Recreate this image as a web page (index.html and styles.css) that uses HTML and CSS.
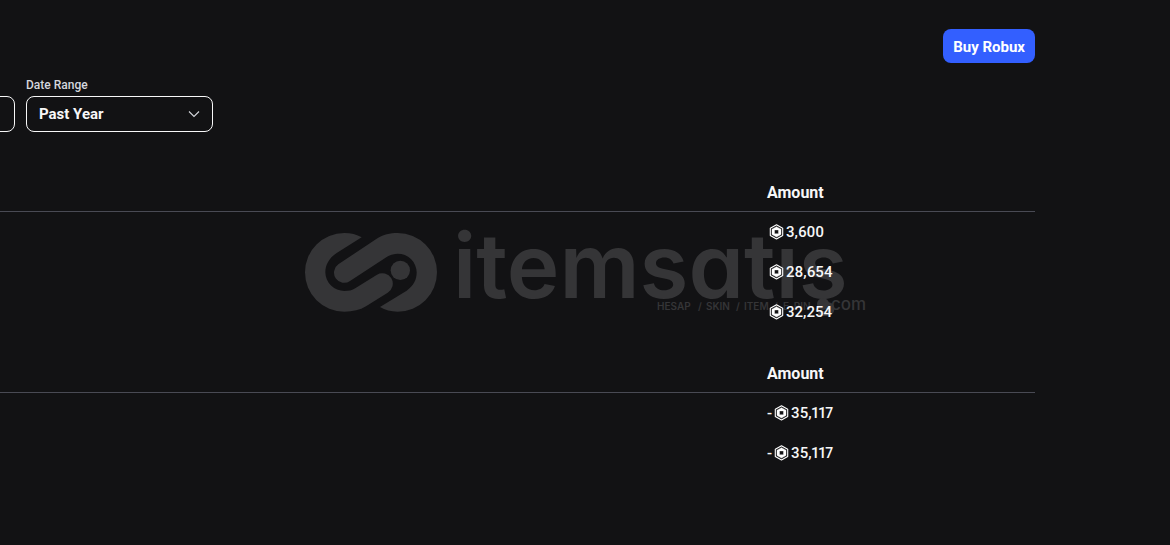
FILE: index.html
```html
<!DOCTYPE html>
<html lang="en">
<head>
    <meta charset="UTF-8">
    <meta name="viewport" content="width=device-width, initial-scale=1.0">
    <title>My Transactions</title>
    <link rel="stylesheet" href="styles.css">
</head>
<body>
    <svg class="hidden" aria-hidden="true">
        <symbol id="robux" viewBox="0 0 16 16">
            <path d="M8.5 .8 14.7 4.2v7.2l-6.2 3.5-6.2-3.5V4.2z" fill="none" stroke="#fff" stroke-width="1.1" stroke-linejoin="round"/>
            <path fill-rule="evenodd" fill="#fff" stroke="#fff" stroke-width=".4" stroke-linejoin="round" d="M8.5 2.7l4.5 2.5v5.3l-4.5 2.5L4 10.500V5.200zM6.500 5.900v3.900h4V5.900z"/>
        </symbol>
    </svg>
    <!-- watermark -->
    <svg class="watermark" viewBox="0 0 562 82" aria-hidden="true">
        <g transform="translate(-9 -12) scale(.33333)">
            <path d="M200 52C185 43 168 39 148 39A118 118 0 0 0 148 275C174 275 195 270 213 259L278 218A30 30 0 0 0 246 164L182 204C171 211 161 213 148 213A57 57 0 0 1 91 157C91 132 105 112 125 99Z"/>
            <path d="M130 133L245 56C265 43 285 39 308 39A118 118 0 0 1 308 275C288 275 270 270 255 261L335 212C355 198 365 180 365 157A57 57 0 0 0 308 101C295 101 285 105 275 111L165 183A30 30 0 0 1 130 133Z"/>
            <circle cx="316" cy="151" r="29"/>
        </g>
        <text class="wm-name" x="149" y="66">itemsatış</text>
        <circle cx="519" cy="72" r="6"/>
        <text class="wm-com" x="527" y="78">com</text>
        <g class="wm-tags">
            <text x="353" y="78">HESAP</text>
            <text x="394" y="78">/</text>
            <text x="402" y="78">SKIN</text>
            <text x="432" y="78">/</text>
            <text x="440" y="78">ITEM</text>
            <text x="470" y="78">/</text>
            <text x="479" y="78">E-PIN</text>
        </g>
    </svg>
    <main class="page">
        <div class="top">
            <button type="button" class="buy_btn">Buy Robux</button>
        </div>
        <div class="filters">
            <div class="field">
                <select class="sel" aria-label="Transaction type">
                    <option value=""></option>
                </select>
            </div>
            <div class="field">
                <label class="field_tit" for="range">Date Range</label>
                <div class="sel_box">
                    <select class="sel" id="range">
                        <option>Past Year</option>
                    </select>
                    <svg class="arrow" viewBox="0 0 12 12" aria-hidden="true"><path d="M1 3.500 6 8.500l5-5" fill="none" stroke="#d5d7dd" stroke-width="1.1"/></svg>
                </div>
            </div>
        </div>
        <table class="list">
            <thead>
                <tr><td></td><th scope="col" class="amount">Amount</th></tr>
            </thead>
            <tbody>
                <tr><td></td><td><span class="money"><svg class="coin"><use href="#robux"/></svg>3,600</span></td></tr>
                <tr><td></td><td><span class="money"><svg class="coin"><use href="#robux"/></svg>28,654</span></td></tr>
                <tr><td></td><td><span class="money"><svg class="coin"><use href="#robux"/></svg>32,254</span></td></tr>
            </tbody>
        </table>
        <table class="list">
            <thead>
                <tr><td></td><th scope="col" class="amount">Amount</th></tr>
            </thead>
            <tbody>
                <tr><td></td><td><span class="money">-<svg class="coin"><use href="#robux"/></svg>35,117</span></td></tr>
                <tr><td></td><td><span class="money">-<svg class="coin"><use href="#robux"/></svg>35,117</span></td></tr>
            </tbody>
        </table>
    </main>
</body>
</html>
```
FILE: styles.css
```css
* { box-sizing: border-box; }
body { margin: 0; min-height: 100vh; position: relative; background-color: #121214; color: #f7f7f8;
    font-family: Roboto, "Liberation Sans", sans-serif; font-size: 16px; line-height: 20px; }
.hidden { display: none; }

/* watermark */
.watermark { position: absolute; top: 0; bottom: 0; left: 0; right: 0; margin: auto;
    width: 562px; height: 82px; fill: #353537; overflow: visible; }
.wm-name { font-family: Inter, sans-serif; font-weight: 600; font-size: 89px; font-feature-settings: "cv11"; }
.wm-com { font-family: Inter, sans-serif; font-weight: 500; font-size: 17px; }
.wm-tags { font-family: Inter, sans-serif; font-weight: 600; font-size: 10px; }

.page { position: relative; padding: 29px 135px 40px 0; }
.top { display: flex; justify-content: flex-end; }
.buy_btn { height: 34px; padding: 1px 10px 0; border: 0; border-radius: 8px; background-color: #335fff;
    color: #fff; font: inherit; font-size: 15px; font-weight: 700; cursor: pointer; }

/* first filter runs off the left edge */
.filters { display: flex; align-items: flex-end; gap: 11px; margin: 14px 0 40px -172px; }
.field { width: 187px; }
.field_tit { display: block; height: 19px; line-height: 16px; font-size: 12px; font-weight: 500; color: #d5d7dd; }
.sel_box { position: relative; }
.sel { display: block; width: 100%; height: 36px; padding: 0 36px 0 12px; border: 1px solid #f7f7f8;
    border-radius: 8px; background-color: transparent; color: #f7f7f8; font: inherit; font-size: 15px; font-weight: 700; appearance: none; }
.arrow { position: absolute; top: 12px; right: 13px; width: 12px; height: 12px; pointer-events: none; }

.list { width: 100%; margin-bottom: 21px; border-collapse: separate; border-spacing: 0; table-layout: fixed; }
.list th, .list td { height: 40px; padding: 0; text-align: left; }
.list thead th, .list thead td { padding-top: 2px; border-bottom: 1px solid #494a54; }
.amount { width: 268px; font-weight: 700; }
.money { display: flex; align-items: center; font-size: 15px; font-weight: 500; font-variant-numeric: proportional-nums; }
.coin { width: 16px; height: 16px; margin: 0 2px 0 1px; }
```
